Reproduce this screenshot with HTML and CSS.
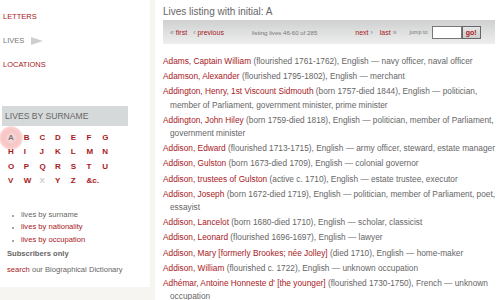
FILE: index.html
```html
<!DOCTYPE html>
<html lang="en">
<head>
    <meta charset="UTF-8">
    <title>Lives listing with initial: A</title>
    <link rel="stylesheet" href="styles.css">
</head>
<body>
    <div class="pagina">
        <!-- MENU LATERAL -->
        <div class="lateral">
            <ul class="menu">
                <li><a href="#">LETTERS</a></li>
                <li class="actual">LIVES
                    <svg class="flecha" width="12" height="8" viewBox="0 0 12 8"><polygon points="0,0 12,4 0,8" fill="#cfcfcf"/></svg>
                </li>
                <li><a href="#">LOCATIONS</a></li>
            </ul>

            <div class="cabecera">LIVES BY SURNAME</div>
            <div class="letras">
                <span class="marcada">A</span><a href="#">B</a><a href="#">C</a><a href="#">D</a><a href="#">E</a><a href="#">F</a><a href="#">G</a>
                <a href="#">H</a><a href="#">I</a><a href="#">J</a><a href="#">K</a><a href="#">L</a><a href="#">M</a><a href="#">N</a>
                <a href="#">O</a><a href="#">P</a><a href="#">Q</a><a href="#">R</a><a href="#">S</a><a href="#">T</a><a href="#">U</a>
                <a href="#">V</a><a href="#">W</a><span class="vacia">X</span><a href="#">Y</a><a href="#">Z</a><a href="#">&amp;c.</a>
            </div>

            <ul class="otros">
                <li>lives by surname</li>
                <li><a href="#">lives by nationality</a></li>
                <li><a href="#">lives by occupation</a></li>
            </ul>

            <div class="socios">Subscribers only</div>
            <p class="buscar"><a href="#">search</a> our Biographical Dictionary</p>
        </div>

        <!-- LISTADO -->
        <div class="principal">
            <h1 class="titulo">Lives listing with initial: A</h1>
            <div class="paginador">
                <a href="#" class="primero"><span class="gris">&laquo;</span> first</a>
                <a href="#" class="anterior"><span class="gris">&lsaquo;</span> previous</a>
                <span class="info">listing lives 46-60 of 285</span>
                <a href="#" class="siguiente">next <span class="gris">&rsaquo;</span></a>
                <a href="#" class="ultimo">last <span class="gris">&raquo;</span></a>
                <span class="saltar">jump to</span>
                <input type="text" class="campo">
                <button type="button" class="boton">go!</button>
            </div>

            <ul class="vidas">
                <li><a href="#">Adams, Captain William</a> (flourished 1761-1762), English &mdash; navy officer, naval officer</li>
                <li><a href="#">Adamson, Alexander</a> (flourished 1795-1802), English &mdash; merchant</li>
                <li><a href="#">Addington, Henry, 1st Viscount Sidmouth</a> (born 1757-died 1844), English &mdash; politician, member of Parliament, government minister, prime minister</li>
                <li><a href="#">Addington, John Hiley</a> (born 1759-died 1818), English &mdash; politician, member of Parliament, government minister</li>
                <li><a href="#">Addison, Edward</a> (flourished 1713-1715), English &mdash; army officer, steward, estate manager</li>
                <li><a href="#">Addison, Gulston</a> (born 1673-died 1709), English &mdash; colonial governor</li>
                <li><a href="#">Addison, trustees of Gulston</a> (active c. 1710), English &mdash; estate trustee, executor</li>
                <li><a href="#">Addison, Joseph</a> (born 1672-died 1719), English &mdash; politician, member of Parliament, poet, essayist</li>
                <li><a href="#">Addison, Lancelot</a> (born 1680-died 1710), English &mdash; scholar, classicist</li>
                <li><a href="#">Addison, Leonard</a> (flourished 1696-1697), English &mdash; lawyer</li>
                <li><a href="#">Addison, Mary [formerly Brookes; n&eacute;e Jolley]</a> (died 1710), English &mdash; home-maker</li>
                <li><a href="#">Addison, William</a> (flourished c. 1722), English &mdash; unknown occupation</li>
                <li><a href="#">Adh&eacute;mar, Antoine Honneste d' [the younger]</a> (flourished 1730-1750), French &mdash; unknown occupation</li>
            </ul>
        </div>
    </div>
</body>
</html>
```

FILE: styles.css
```css
* {
    box-sizing: border-box;
}
body {
    margin: 0;
    background-color: #f6f5f2;
    font-family: "Liberation Sans", Arial, sans-serif;
    color: #666;
}
a {
    color: #a8181c;
    text-decoration: none;
}
ul {
    list-style: none;
    margin: 0;
    padding: 0;
}
.pagina {
    display: flex;
    align-items: flex-start;
    gap: 5px;
    height: 300px;
    overflow: hidden;
}

/* lateral */
.lateral {
    width: 150px;
    flex: none;
    height: 287px;
    background-color: white;
    padding: 5px 0 0 2px;
}
.menu li {
    font-size: 7.5px;
    line-height: 24px;
    padding-left: 1px;
    display: flex;
    align-items: center;
}
.menu .actual {
    color: #777;
}
.flecha {
    margin-left: 7px;
}
.cabecera {
    margin-top: 29px;
    width: 126px;
    height: 20px;
    line-height: 20px;
    background-color: #d6d9d9;
    padding-left: 3px;
    font-size: 8.6px;
    color: #666;
}
.letras {
    position: relative;
    z-index: 0;
    display: grid;
    grid-template-columns: repeat(7, 15.7px);
    grid-auto-rows: 14.4px;
    padding: 5px 0 0 6px;
    font-size: 8px;
    font-weight: bold;
    line-height: 14.4px;
}
.letras .vacia {
    color: #ccc;
}
.letras .marcada {
    position: relative;
    color: #777;
}
.letras .marcada::before {
    content: "";
    position: absolute;
    left: -9px;
    top: -5px;
    width: 24px;
    height: 24px;
    border-radius: 50%;
    background: radial-gradient(circle, rgba(240, 205, 205, 0.5) 0%, rgba(240, 150, 150, 0.55) 40%, rgba(245, 140, 140, 0.45) 58%, rgba(250, 190, 190, 0.15) 80%, rgba(255, 255, 255, 0) 100%);
    z-index: -1;
}
.otros {
    margin-top: 20px;
    padding-left: 10px;
    list-style: disc;
    list-style-position: inside;
}
.otros li {
    font-size: 7.6px;
    line-height: 12.5px;
}
.otros li::marker {
    color: #888;
    font-size: 6px;
}
.socios {
    margin-top: 3px;
    padding-left: 5px;
    font-size: 7.6px;
    font-weight: bold;
    color: #666;
}
.buscar {
    margin: 7px 0 0;
    padding-left: 5px;
    font-size: 7.6px;
}

/* principal */
.principal {
    flex: 1;
    height: 300px;
    background-color: white;
    padding: 5px 2px 0 8px;
}
.titulo {
    margin: 0;
    font-size: 10px;
    font-weight: normal;
    line-height: 14px;
    color: #666;
}
.paginador {
    display: flex;
    align-items: center;
    margin: 1px 3px 0 0;
    height: 24px;
    padding-left: 7px;
    background: linear-gradient(#cfd0d0, #eeeeee);
    font-size: 7px;
}
.gris {
    color: #888;
}
.anterior {
    margin-left: 6px;
}
.info {
    margin-left: 28px;
    font-size: 6.1px;
    color: #777;
}
.siguiente {
    margin-left: 38px;
}
.ultimo {
    margin-left: 7px;
}
.saltar {
    margin-left: 13px;
    font-size: 5.5px;
    color: #777;
}
.campo {
    margin-left: 4px;
    width: 30px;
    height: 13px;
    border: 1px solid #777;
    background-color: white;
    padding: 0;
}
.boton {
    width: 19px;
    height: 13px;
    padding: 0;
    border: 1px solid #666;
    background: linear-gradient(#e6e6e6, #cccccc);
    color: #a8181c;
    font-family: "Liberation Sans", Arial, sans-serif;
    font-size: 7px;
    font-weight: bold;
}
.vidas {
    margin-top: 11px;
}
.vidas li {
    font-size: 8.3px;
    line-height: 13.2px;
    margin-bottom: 2px;
    padding-left: 7px;
    text-indent: -7px;
}
```
